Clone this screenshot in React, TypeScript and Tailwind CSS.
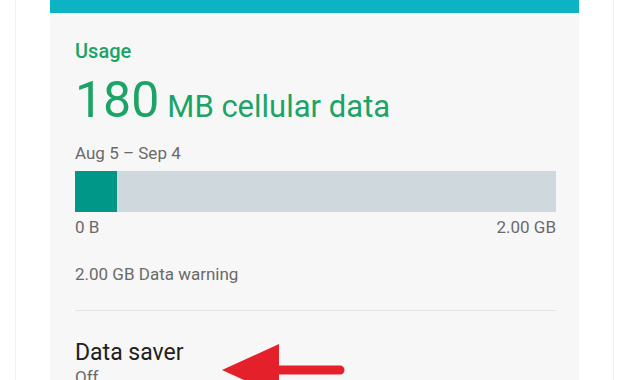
// Cellular data usage card (Android settings style) with a red callout arrow pointing at "Data saver".
const USED_PCT = 42 / 481;

const font = { fontFamily: 'Roboto, "Noto Sans", sans-serif' };

const ArrowCallout = (): JSX.Element => (
  <svg className="pointer-events-none absolute left-0 top-0" width="630" height="380" viewBox="0 0 630 380">
    <polygon points="222,370 279,344 279,396" fill="#e4202a" />
    <path d="M276 370 H340" stroke="#e4202a" strokeWidth="9" strokeLinecap="round" />
  </svg>
);

export default function App(): JSX.Element {
  return (
    <div className="relative h-[380px] w-[630px] overflow-hidden bg-white" style={font}>
      <div className="ml-[15px] h-full w-[599px] border-x border-[#f0f0f0] pl-[34px]">
        <div className="h-full w-[529px] bg-[#f7f7f7]">
          <div className="h-[13px] bg-[#0cb4c3]" />
          <div className="pl-[25px] pr-[23px] pt-[26px]">
            <p className="text-[20px] font-medium leading-[24px] text-[#1ba466]">Usage</p>
            <div className="mt-[12px] flex items-baseline gap-[8px] text-[#1ba466]">
              <span className="text-[50px] leading-[50px]">180</span>
              <span className="text-[31px] leading-[50px]">MB cellular data</span>
            </div>
            <p className="mt-[11px] text-[17px] leading-[20px] text-[#6a6a6a]">Aug 5 – Sep 4</p>
            <div className="mt-[8px] h-[41px] bg-[#cfd8dc]">
              <div className="h-full bg-[#009688]" style={{ width: `${USED_PCT * 100}%` }} />
            </div>
            <div className="mt-[5px] flex justify-between text-[17px] leading-[20px] text-[#6a6a6a]">
              <span>0 B</span>
              <span>2.00 GB</span>
            </div>
            <p className="mt-[27px] text-[17px] leading-[20px] text-[#6a6a6a]">2.00 GB Data warning</p>
            <div className="mt-[26px] h-px bg-[#e4e4e4]" />
            <p className="mt-[28px] text-[23px] leading-[28px] text-[#212121]">Data saver</p>
            <p className="text-[17px] leading-[20px] text-[#6a6a6a]">Off</p>
          </div>
        </div>
      </div>
      <ArrowCallout />
    </div>
  );
}
